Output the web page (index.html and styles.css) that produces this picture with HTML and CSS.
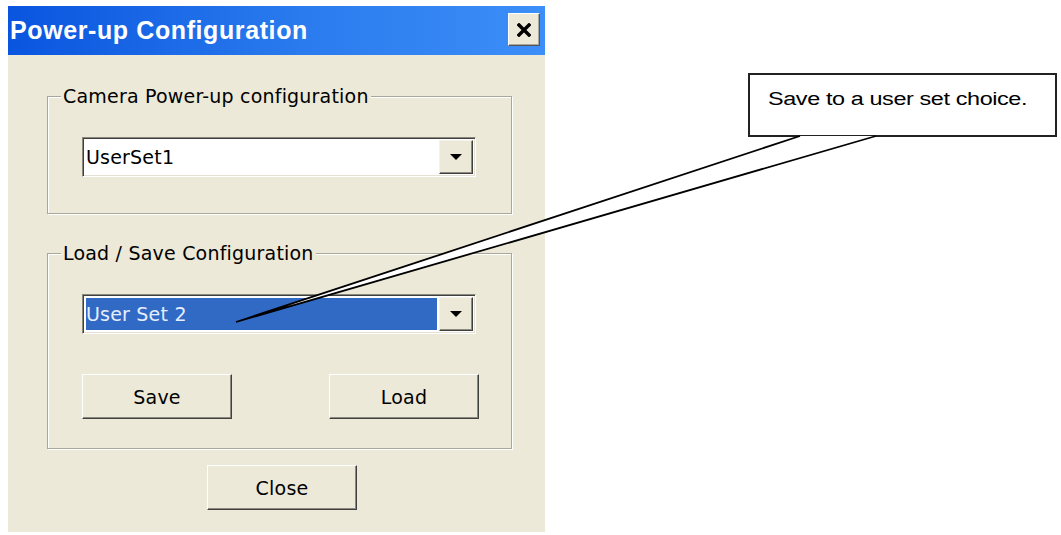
FILE: index.html
```html
<!DOCTYPE html>
<html lang="en">
<head>
    <meta charset="UTF-8">
    <title>Power-up Configuration</title>
    <link rel="stylesheet" href="styles.css">
</head>
<body>

<div class="window">
    <div class="titlebar">
        <span class="title">Power-up Configuration</span>
        <span class="close-x">
            <svg width="14" height="14" viewBox="0 0 14 14">
                <path d="M2 2 L12 12 M12 2 L2 12" stroke="#000" stroke-width="3.4" stroke-linecap="square"/>
            </svg>
        </span>
    </div>

    <div class="client">
        <fieldset class="group group-power">
            <legend>Camera Power-up configuration</legend>
            <div class="combo">
                <span class="combo-text">UserSet1</span>
                <span class="drop"><i></i></span>
            </div>
        </fieldset>

        <fieldset class="group group-save">
            <legend>Load / Save Configuration</legend>
            <div class="combo">
                <span class="combo-text selected">User Set 2</span>
                <span class="drop"><i></i></span>
            </div>
            <div class="button-row">
                <button class="btn">Save</button>
                <button class="btn">Load</button>
            </div>
        </fieldset>

        <button class="btn btn-close">Close</button>
    </div>
</div>

<div class="callout"><span>Save to a user set choice.</span></div>

<svg class="pointer" width="1061" height="535" viewBox="0 0 1061 535">
    <polyline points="800,136 236,322 876,136" fill="#fff" stroke="#000" stroke-width="1.8"/>
</svg>

</body>
</html>
```

FILE: styles.css
```css
body {
    margin: 0;
    background: #fff;
    font-family: "DejaVu Sans", Tahoma, sans-serif;
    position: relative;
    width: 1061px;
    height: 535px;
    overflow: hidden;
}
.window {
    margin: 6px 0 0 8px;
    width: 537px;
    height: 526px;
    background: #ece9d8;
}
.titlebar {
    height: 49px;
    background: linear-gradient(to right, #0a55df, #2a7bee 55%, #3c8ef8);
    display: flex;
    align-items: center;
    justify-content: space-between;
    padding: 0 5px 0 2px;
}
.title {
    color: #fff;
    font-family: "Liberation Sans", Arial, sans-serif;
    font-weight: bold;
    font-size: 25px;
    letter-spacing: 0.6px;
}
.close-x {
    width: 30px;
    height: 31px;
    background: #ece9d8;
    border: 1px solid;
    border-color: #fff #555 #555 #fff;
    box-shadow: inset -1px -1px 0 #a9a69a;
    display: flex;
    align-items: center;
    justify-content: center;
    margin-bottom: 2px;
}
.client {
    padding-top: 30px;
}
.group {
    margin: 0 0 0 39px;
    padding: 0;
    width: 465px;
    box-sizing: border-box;
    border: 1px solid #a9a79c;
    box-shadow: inset 1px 1px 0 #fff, 1px 1px 0 #fff;
    font-size: 19px;
    letter-spacing: 0.2px;
}
.group legend {
    margin-left: 13px;
    padding: 0 2px;
    line-height: 22px;
    background: #ece9d8;
    color: #000;
}
.group-power {
    padding-bottom: 36px;
}
.group-save {
    margin-top: 28px;
    padding-bottom: 29px;
}
.combo {
    margin: 30px 0 0 34px;
    width: 394px;
    height: 40px;
    box-sizing: border-box;
    display: flex;
    background: #fff;
    border: 1px solid;
    border-color: #8a877c #fff #fff #8a877c;
    box-shadow: inset 1px 1px 0 #404040, inset -1px -1px 0 #e4e1d4;
    padding: 3px;
}
.combo-text {
    flex: 1;
    display: flex;
    align-items: center;
    padding-left: 0;
    color: #000;
}
.combo-text.selected {
    background: #316ac5;
    color: #e6eeff;
    margin-right: 2px;
}
.drop {
    width: 32px;
    background: #ece9d8;
    border: 1px solid;
    border-color: #f4f2ea #404040 #404040 #f4f2ea;
    box-shadow: inset -1px -1px 0 #8c897e;
    display: flex;
    align-items: center;
    justify-content: center;
    margin: -1px -1px -1px 0;
}
.drop i {
    width: 0;
    height: 0;
    border-left: 6px solid transparent;
    border-right: 6px solid transparent;
    border-top: 6px solid #000;
}
.button-row {
    display: flex;
    justify-content: space-between;
    margin: 40px 32px 0 34px;
}
.btn {
    width: 150px;
    height: 45px;
    background: #ece9d8;
    border: 1px solid;
    border-color: #fff #404040 #404040 #fff;
    box-shadow: inset -1px -1px 0 #8c897e;
    font-family: "DejaVu Sans", Tahoma, sans-serif;
    font-size: 19px;
    letter-spacing: 0.2px;
    color: #000;
    padding: 0;
}
.btn-close {
    display: block;
    margin: 16px 0 0 199px;
}
.callout {
    position: absolute;
    left: 748px;
    top: 73px;
    width: 309px;
    height: 64px;
    box-sizing: border-box;
    border: 2px solid #222;
    background: #fff;
    font-family: "Liberation Sans", Arial, sans-serif;
    font-size: 18px;
    line-height: 22px;
    padding: 13px 0 0 18px;
}
.callout span {
    display: inline-block;
    transform: scaleX(1.3);
    transform-origin: left center;
    white-space: nowrap;
    letter-spacing: -0.3px;
}
.pointer {
    position: absolute;
    left: 0;
    top: 0;
    pointer-events: none;
}
```
